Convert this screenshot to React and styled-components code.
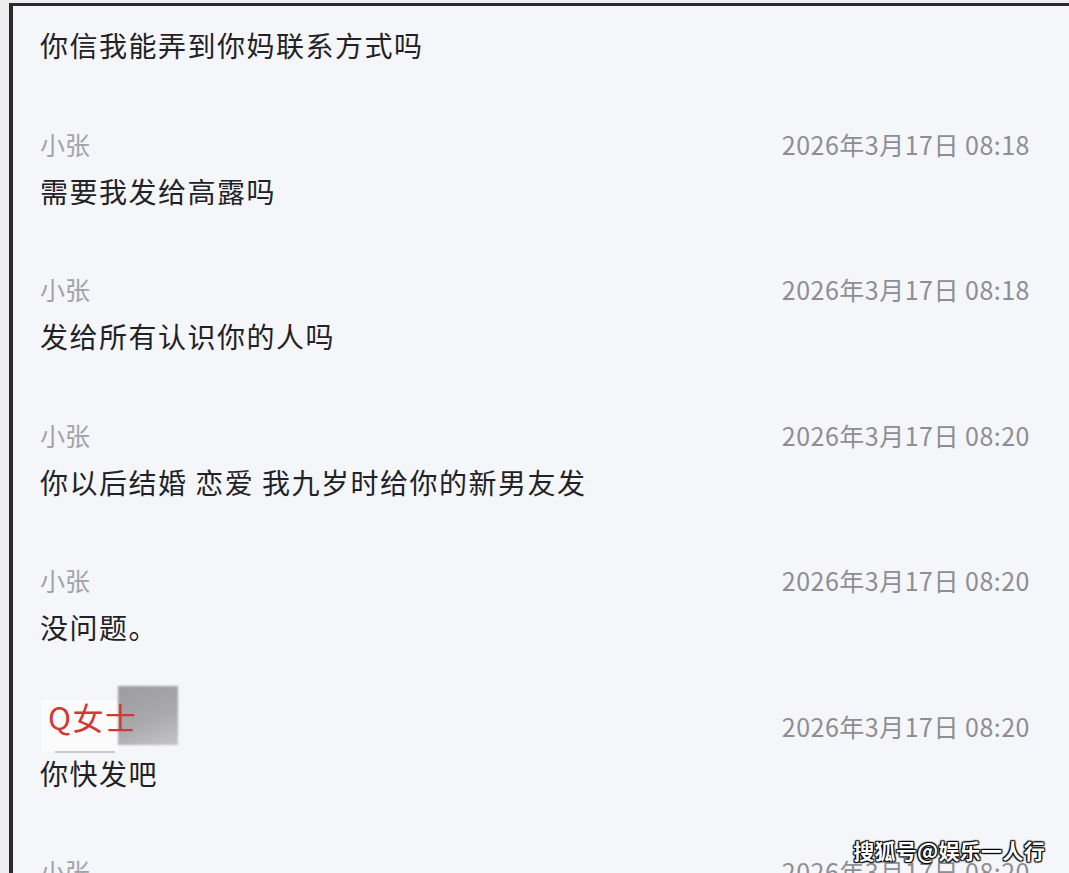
import React from 'react';
import styled, { createGlobalStyle } from 'styled-components';

const GlobalStyle = createGlobalStyle`
  html, body {
    margin: 0;
    padding: 0;
    height: 873px;
    overflow: hidden;
    background: #eeeeef;
    font-family: "Noto Sans CJK SC", "Noto Sans", sans-serif;
  }
`;

const Page = styled.div`
  position: relative;
  height: 873px;
  overflow: hidden;
  padding: 3px 0 0 9px;
  box-sizing: border-box;
`;

const Frame = styled.div`
  height: 100%;
  background: #f5f6fa;
  border-top: 3px solid #2b2b2d;
  border-left: 4px solid #2b2b2d;
  display: flex;
  flex-direction: column;
`;

const Entry = styled.div`
  padding: ${({ first }) => (first ? '21px' : '31px')} 39px 34.5px 27px;
  display: flex;
  flex-direction: column;
  gap: 14px;
`;

const Header = styled.div`
  height: 30px;
  display: flex;
  align-items: center;
  justify-content: space-between;
`;

const Name = styled.span`
  font-size: 25px;
  line-height: 30px;
  color: #a2a3a8;
`;

const Time = styled.span`
  font-size: 25px;
  line-height: 30px;
  color: #8d8e93;
  letter-spacing: 0.5px;
`;

const Message = styled.div`
  font-size: 28px;
  line-height: 36px;
  color: #222226;
  letter-spacing: 1.5px;
`;

const Divider = styled.div`
  height: 1px;
  margin: 0 34px 0 42px;
  background: #e4e5ea;
`;

const Badge = styled.div`
  position: relative;
  height: 52px;
  margin-left: 2px;
  padding: 0 0 0 6px;
  width: 76px;
  background: #fbfbfc;
  box-sizing: border-box;

  &::after {
    content: '';
    position: absolute;
    left: 13px;
    bottom: -1px;
    width: 60px;
    height: 2px;
    background: #c8c9cc;
  }
`;

const BadgeText = styled.span`
  position: relative;
  z-index: 3;
  font-size: 31px;
  line-height: 34px;
  color: #cf3a35;
  white-space: nowrap;
  letter-spacing: 1.5px;
`;

const Redaction = styled.div`
  position: absolute;
  left: 76px;
  top: -14px;
  width: 60px;
  height: 59px;
  background: linear-gradient(160deg, #9d9d9f 0%, #a9a9ab 55%, #c4c4c6 100%);
  filter: blur(0.8px);
  z-index: 2;
`;

const Watermark = styled.div`
  position: absolute;
  right: 24px;
  top: 836px;
  font-size: 21px;
  line-height: 28px;
  font-weight: 700;
  color: #ffffff;
  letter-spacing: 0.3px;
  text-shadow: 0 0 2px #000, 1px 1px 1px #000, -1px -1px 1px #000, 1px -1px 1px #000, -1px 1px 1px #000;
  z-index: 5;
`;

const entries = [
  { name: '小张', time: '2026年3月17日 08:18', text: '需要我发给高露吗' },
  { name: '小张', time: '2026年3月17日 08:18', text: '发给所有认识你的人吗' },
  { name: '小张', time: '2026年3月17日 08:20', text: '你以后结婚 恋爱 我九岁时给你的新男友发' },
  { name: '小张', time: '2026年3月17日 08:20', text: '没问题。' },
  { name: 'Q女士', time: '2026年3月17日 08:20', text: '你快发吧', highlight: true },
  { name: '小张', time: '2026年3月17日 08:20', text: '' },
];

const App = () => (
  <>
    <GlobalStyle />
    <Page>
      <Frame>
        <Entry first>
          <Message>你信我能弄到你妈联系方式吗</Message>
        </Entry>
        <Divider />
        {entries.map((e, i) => (
          <React.Fragment key={i}>
            <Entry>
              <Header>
                {e.highlight ? (
                  <Badge>
                    <BadgeText>{e.name}</BadgeText>
                    <Redaction />
                  </Badge>
                ) : (
                  <Name>{e.name}</Name>
                )}
                <Time>{e.time}</Time>
              </Header>
              <Message>{e.text}</Message>
            </Entry>
            <Divider />
          </React.Fragment>
        ))}
      </Frame>
      <Watermark>搜狐号@娱乐一人行</Watermark>
    </Page>
  </>
);

export default App;
